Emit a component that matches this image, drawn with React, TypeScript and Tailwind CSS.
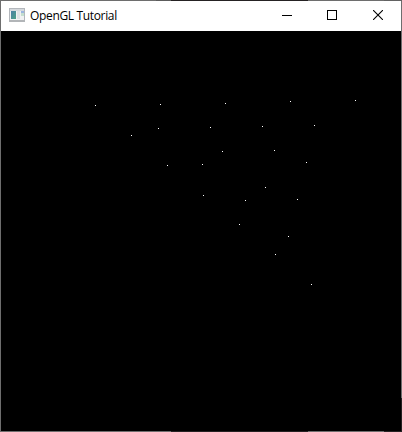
const points: [number, number][] = [
  [95, 105], [160, 104], [225, 103], [290, 101], [355, 100],
  [131, 135], [158, 128], [210, 127], [262, 126], [314, 125],
  [167, 165], [202, 164], [222, 151], [274, 150], [306, 162],
  [203, 195], [245, 200], [265, 187], [297, 199],
  [239, 224], [288, 236], [275, 254], [311, 284],
];

function AppIcon() {
  return (
    <svg width="16" height="14" viewBox="0 0 16 14" shapeRendering="crispEdges" className="shrink-0">
      <defs>
        <linearGradient id="pane" x1="0" y1="0" x2="1" y2="1">
          <stop offset="0" stopColor="#4b7fa5" />
          <stop offset="1" stopColor="#4da286" />
        </linearGradient>
      </defs>
      <rect width="16" height="14" fill="#b3b7bc" />
      <rect x="1" y="1" width="14" height="2" fill="#d5d9dd" />
      <rect x="1" y="3" width="14" height="9" fill="#f1f2f3" />
      <rect x="2" y="3" width="5" height="8" fill="url(#pane)" />
      <rect x="8" y="3" width="3" height="8" fill="#dfe2e4" />
      <rect x="12" y="3" width="3" height="2" fill="#9bb5e0" />
      <rect x="12" y="5" width="3" height="3" fill="#c4dfcf" />
      <rect y="12" width="16" height="2" fill="#b2b5b8" />
    </svg>
  );
}

function TitleBar() {
  return (
    <header className="flex h-[30px] shrink-0 items-start bg-white">
      <div className="flex h-[29px] flex-1 items-start pl-2 pt-[7px]">
        <AppIcon />
        <span className="ml-[5px] whitespace-nowrap font-['Open_Sans','Noto_Sans',sans-serif] text-[12px] leading-4 tracking-[-0.34px] text-black">
          OpenGL Tutorial
        </span>
      </div>
      <button aria-label="Minimize" className="flex h-[29px] w-[45px] justify-center pt-[14px]">
        <span className="h-px w-[10px] bg-black" />
      </button>
      <button aria-label="Maximize" className="flex h-[29px] w-[45px] justify-center pt-[9px]">
        <span className="size-[10px] border border-black" />
      </button>
      <button aria-label="Close" className="flex h-[29px] w-[47px] justify-center pt-[9px]">
        <svg width="10" height="10" viewBox="0 0 10 10" stroke="#000" strokeWidth="1.1">
          <path d="M0 0L10 10M10 0L0 10" />
        </svg>
      </button>
    </header>
  );
}

function EdgeStrip() {
  return (
    <div className="flex h-px shrink-0">
      <span className="w-[171px] bg-[#6e6e6e]" />
      <span className="w-[137px] bg-[#252223]" />
      <span className="w-[76px] bg-[#6e6e6e]" />
      <span className="flex-1 bg-[#252223]" />
    </div>
  );
}

export default function App() {
  return (
    <div className="flex h-[432px] w-[402px] flex-col overflow-hidden bg-black">
      <div className="flex h-px shrink-0">
        <span className="w-[156px] bg-[#6e6e6e]" />
        <span className="w-[15px] bg-[#5c5c5c]" />
        <span className="w-[137px] bg-[#252223]" />
        <span className="w-[76px] bg-[#6e6e6e]" />
        <span className="flex-1 bg-[#626262]" />
      </div>
      <div className="flex min-h-0 flex-1">
        <div className="w-px bg-[#6e6e6e]" />
        <main className="flex flex-1 flex-col">
          <TitleBar />
          <svg width="400" height="400" viewBox="1 31 400 400" shapeRendering="crispEdges" className="block bg-black">
            {points.map(([x, y]) => (
              <rect key={`${x}-${y}`} x={x} y={y} width="1" height="1" fill="#fff" />
            ))}
          </svg>
        </main>
        <div className="flex w-px flex-col">
          <span className="h-[397px] bg-[#6e6e6e]" />
          <span className="flex-1 bg-[#252223]" />
        </div>
      </div>
      <EdgeStrip />
    </div>
  );
}
